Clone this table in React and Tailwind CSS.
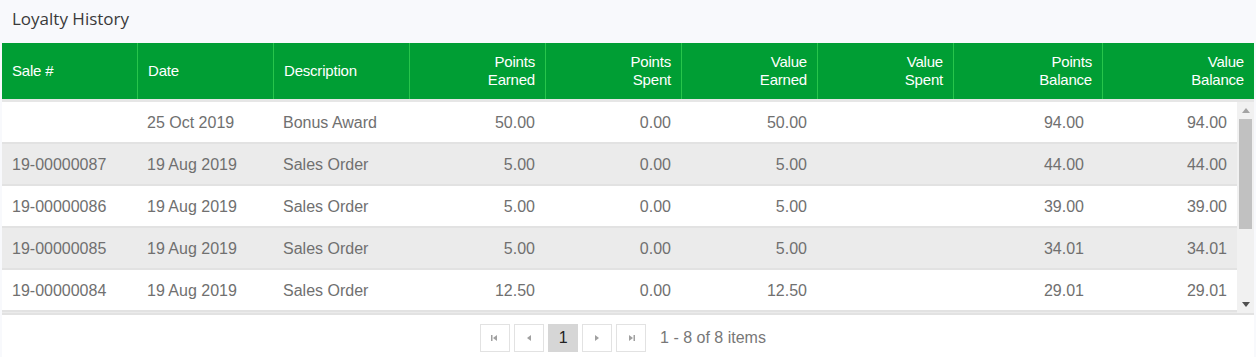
const columns = [
  { key: "sale", label: ["Sale #"], align: "left" },
  { key: "date", label: ["Date"], align: "left" },
  { key: "desc", label: ["Description"], align: "left" },
  { key: "pe", label: ["Points", "Earned"], align: "right" },
  { key: "ps", label: ["Points", "Spent"], align: "right" },
  { key: "ve", label: ["Value", "Earned"], align: "right" },
  { key: "vs", label: ["Value", "Spent"], align: "right" },
  { key: "pb", label: ["Points", "Balance"], align: "right" },
  { key: "vb", label: ["Value", "Balance"], align: "right" },
];

const headWidths = [
  "w-[135px]",
  "w-[136px]",
  "w-[136px]",
  "w-[136px]",
  "w-[136px]",
  "w-[136px]",
  "w-[136px]",
  "w-[149px]",
  "flex-1",
];

const bodyWidths = [
  "w-[135px]",
  "w-[136px]",
  "w-[136px]",
  "w-[136px]",
  "w-[136px]",
  "w-[136px]",
  "w-[136px]",
  "w-[141px]",
  "flex-1",
];

const rows = [
  { sale: "", date: "25 Oct 2019", desc: "Bonus Award", pe: "50.00", ps: "0.00", ve: "50.00", vs: "", pb: "94.00", vb: "94.00" },
  { sale: "19-00000087", date: "19 Aug 2019", desc: "Sales Order", pe: "5.00", ps: "0.00", ve: "5.00", vs: "", pb: "44.00", vb: "44.00" },
  { sale: "19-00000086", date: "19 Aug 2019", desc: "Sales Order", pe: "5.00", ps: "0.00", ve: "5.00", vs: "", pb: "39.00", vb: "39.00" },
  { sale: "19-00000085", date: "19 Aug 2019", desc: "Sales Order", pe: "5.00", ps: "0.00", ve: "5.00", vs: "", pb: "34.01", vb: "34.01" },
  { sale: "19-00000084", date: "19 Aug 2019", desc: "Sales Order", pe: "12.50", ps: "0.00", ve: "12.50", vs: "", pb: "29.01", vb: "29.01" },
  { sale: "19-00000083", date: "12 Aug 2019", desc: "Sales Order", pe: "7.50", ps: "0.00", ve: "7.50", vs: "", pb: "16.51", vb: "16.51" },
  { sale: "19-00000082", date: "05 Aug 2019", desc: "Sales Order", pe: "5.00", ps: "0.00", ve: "5.00", vs: "", pb: "9.01", vb: "9.01" },
  { sale: "19-00000081", date: "01 Aug 2019", desc: "Sales Order", pe: "4.01", ps: "0.00", ve: "4.01", vs: "", pb: "4.01", vb: "4.01" },
];

const PagerButton = ({ children, active }) => (
  <button
    className={
      active
        ? "flex h-[28px] w-[30px] items-center justify-center bg-[#d6d6d6] text-[16px] text-[#222]"
        : "flex h-[28px] w-[30px] items-center justify-center border border-[#e2e2e2] bg-white"
    }
  >
    {children}
  </button>
);

// small triangle icons for pager
const Tri = ({ dir, bar }) => (
  <svg width="10" height="8" viewBox="0 0 10 8">
    {dir === "left" ? (
      <>
        {bar && <rect x="1" y="1" width="1.5" height="6" fill="#a0a0a0" />}
        <path d="M3 4 L7 1 L7 7 Z" fill="#a0a0a0" />
      </>
    ) : (
      <>
        <path d="M3 1 L7 4 L3 7 Z" fill="#a0a0a0" />
        {bar && <rect x="7.5" y="1" width="1.5" height="6" fill="#a0a0a0" />}
      </>
    )}
  </svg>
);

// classic scrollbar look
const ScrollBar = () => (
  <div className="flex w-[17px] flex-col items-center bg-[#f1f1f1]">
    <div className="flex h-[17px] w-full items-center justify-center">
      <svg width="8" height="5" viewBox="0 0 8 5">
        <path d="M0 5 L4 0 L8 5 Z" fill="#a3a3a3" />
      </svg>
    </div>
    <div className="h-[110px] w-[13px] bg-[#c1c1c1]" />
    <div className="flex-1" />
    <div className="flex h-[17px] w-full items-center justify-center">
      <svg width="8" height="5" viewBox="0 0 8 5">
        <path d="M0 0 L8 0 L4 5 Z" fill="#505050" />
      </svg>
    </div>
  </div>
);

export default function App() {
  return (
    <div className="h-[357px] w-[1256px] bg-[#f8f9fc] font-['Liberation_Sans',Arial,sans-serif]">
      <div className="h-[43px] pl-3 pt-[6px] font-['Open_Sans',sans-serif] text-[17px] text-[#3a3a3a]">
        Loyalty History
      </div>

      <div className="mx-[2px] flex flex-col">
        {/* header */}
        <div className="flex h-[56px] bg-[#009e34] text-[15px] leading-[18px] tracking-[-0.2px] text-white">
          {columns.map((col, i) => (
            <div
              key={col.key}
              className={`${headWidths[i]} flex items-center px-[10px] ${
                i > 0 ? "border-l border-[#27c54b]" : ""
              } ${col.align === "right" ? "justify-end text-right" : "justify-start"}`}
            >
              <div>
                {col.label.map((l) => (
                  <div key={l}>{l}</div>
                ))}
              </div>
            </div>
          ))}
        </div>
        <div className="h-[3px] bg-[#e6e6e6]" />

        {/* body */}
        <div className="flex h-[211px] bg-white">
          <div className="flex-1 overflow-hidden text-[16px] text-[#707070]">
            {rows.map((row, r) => (
              <div
                key={r}
                className={`flex h-[42px] border-b-2 border-[#e2e2e2] pt-[1px] ${
                  r % 2 === 1 ? "bg-[#ebebeb]" : "bg-white"
                }`}
              >
                {columns.map((col, i) => (
                  <div
                    key={col.key}
                    className={`${bodyWidths[i]} flex items-center px-[10px] ${
                      col.align === "right" ? "justify-end" : "justify-start"
                    }`}
                  >
                    {row[col.key]}
                  </div>
                ))}
              </div>
            ))}
          </div>
          <ScrollBar />
        </div>
        <div className="h-[2px] bg-[#e2e2e2]" />

        {/* pager */}
        <div className="flex h-[43px] items-center justify-center gap-[4px] border-b border-[#efefef] bg-white pr-[10px] pt-[4px]">
          <PagerButton>
            <Tri dir="left" bar />
          </PagerButton>
          <PagerButton>
            <Tri dir="left" />
          </PagerButton>
          <PagerButton active>1</PagerButton>
          <PagerButton>
            <Tri dir="right" />
          </PagerButton>
          <PagerButton>
            <Tri dir="right" bar />
          </PagerButton>
          <span className="ml-[10px] text-[16px] text-[#777]">1 - 8 of 8 items</span>
        </div>
      </div>
    </div>
  );
}
